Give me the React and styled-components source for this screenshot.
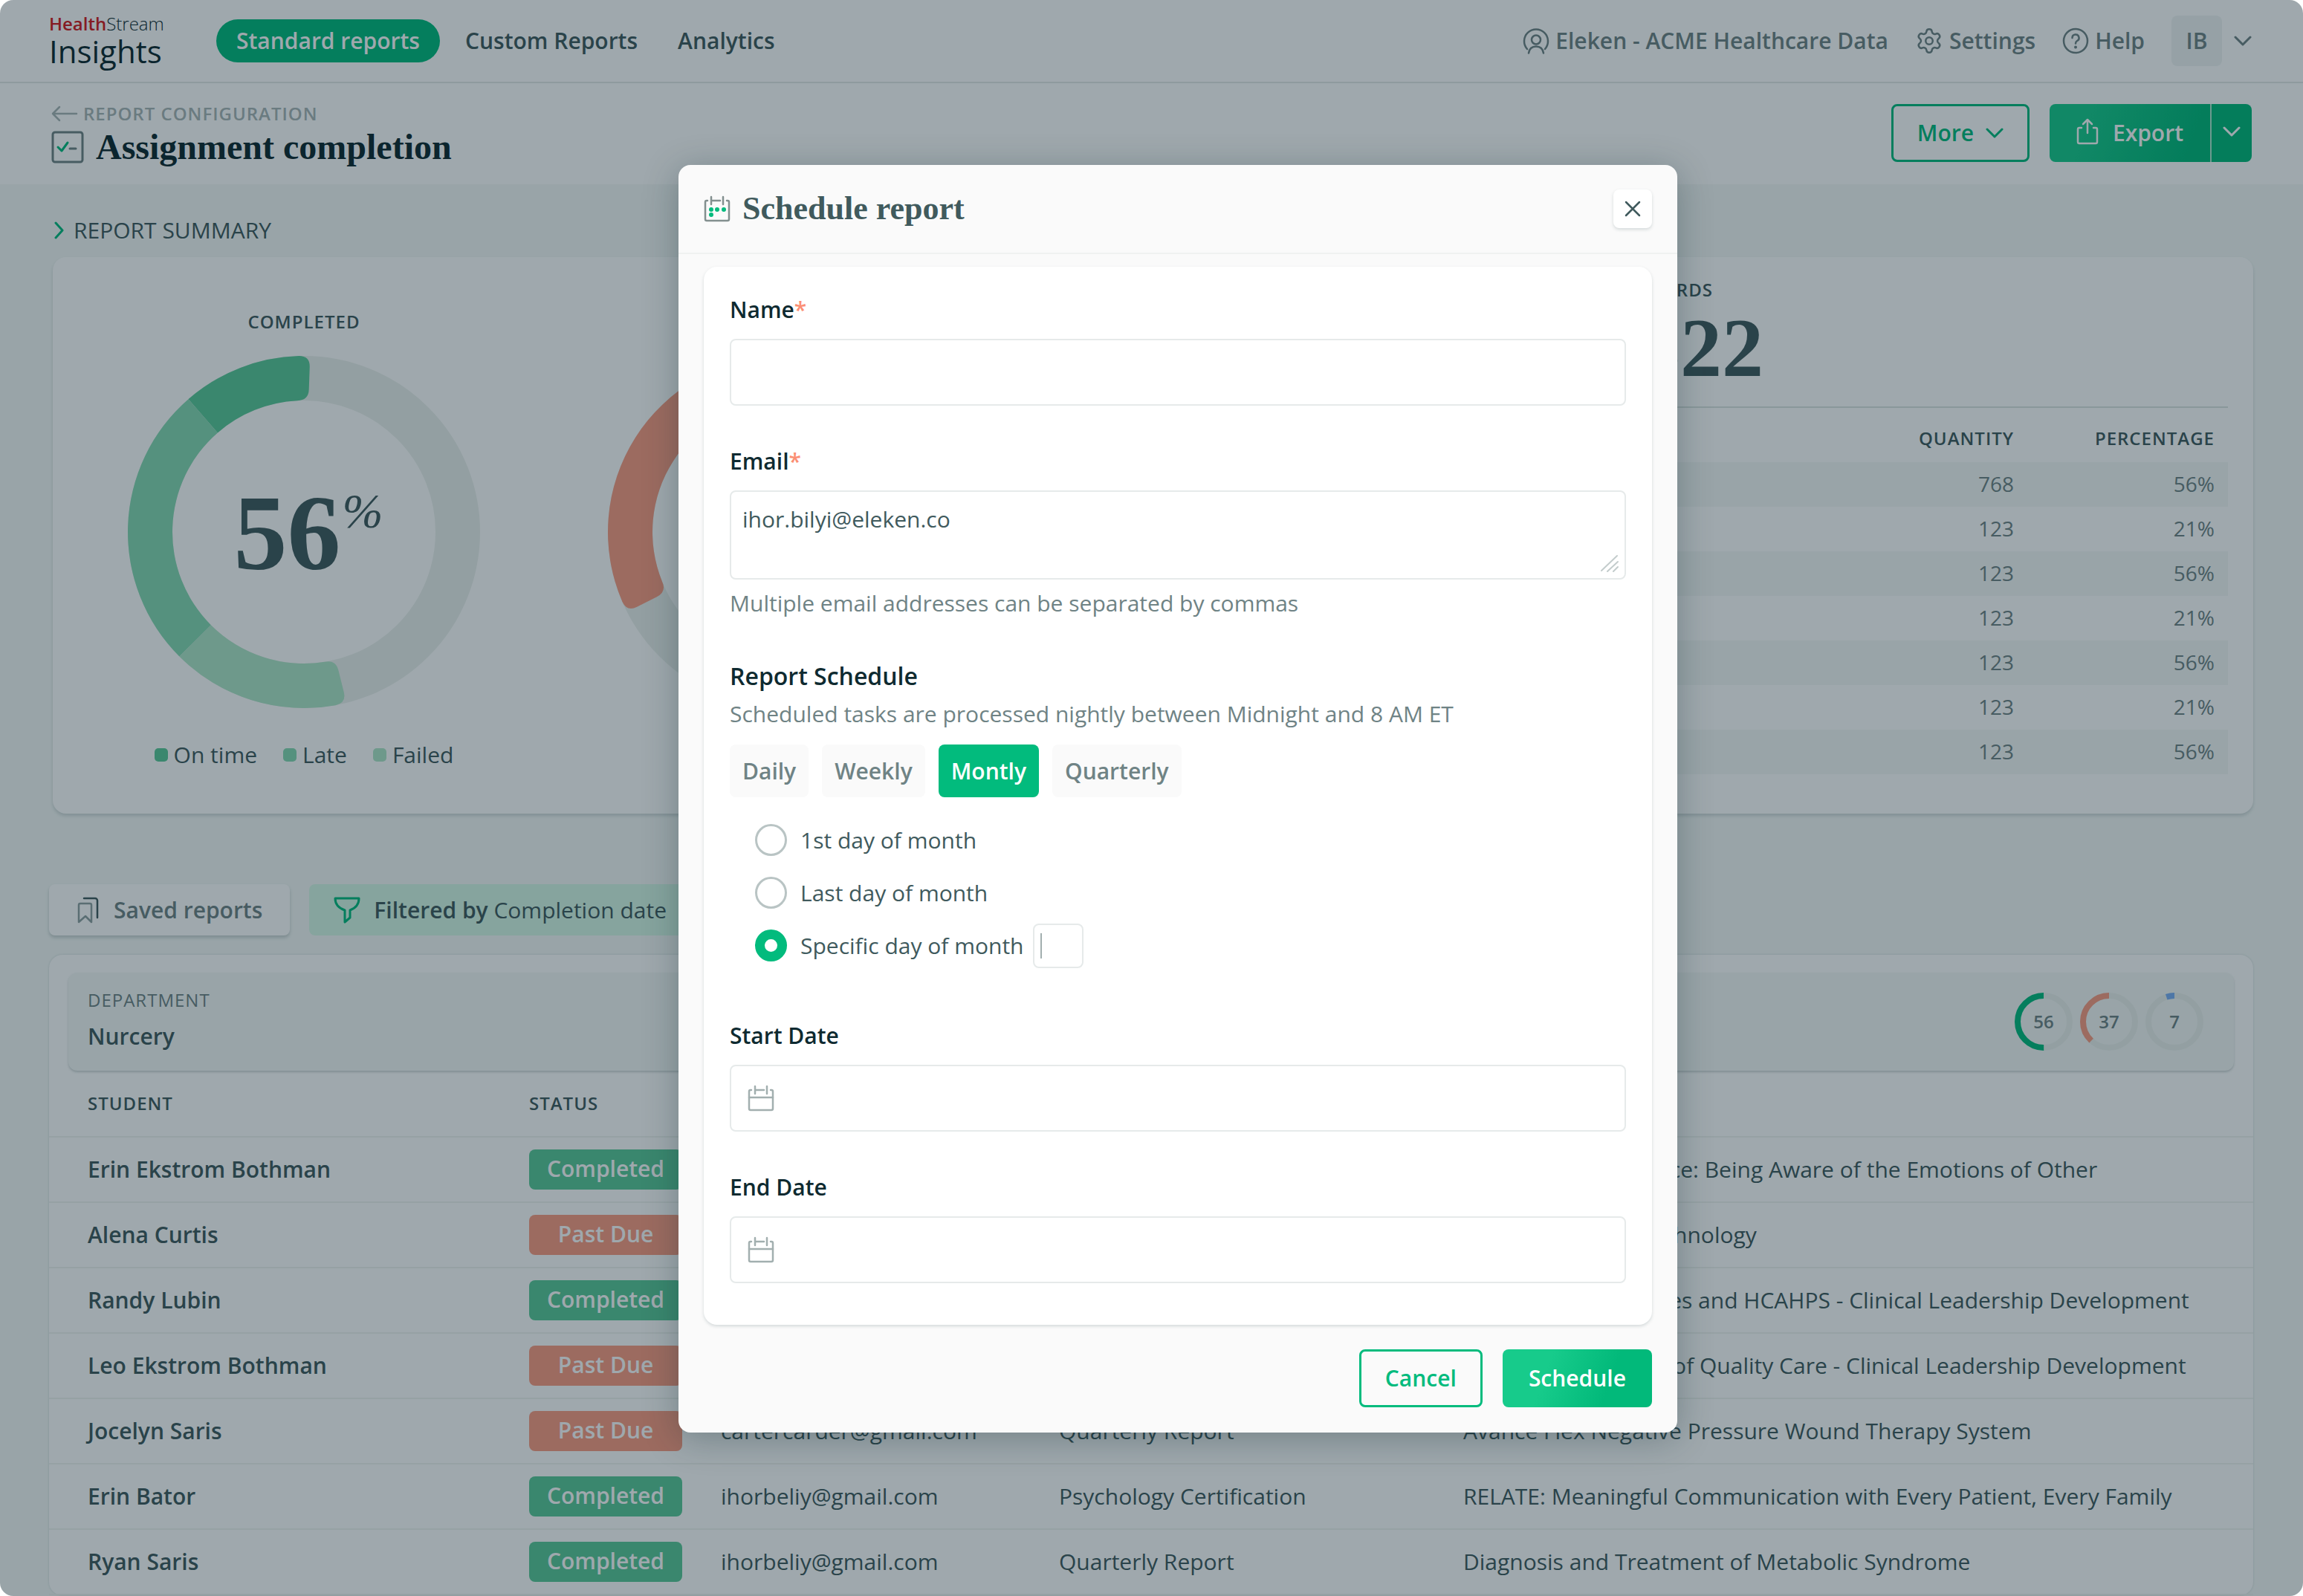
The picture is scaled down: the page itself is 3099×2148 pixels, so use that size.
import React from 'react';
import styled, { createGlobalStyle } from 'styled-components';
import { Settings } from 'lucide-react';

const GlobalStyle = createGlobalStyle`
  * {
    box-sizing: border-box;
  }
  body {
    margin: 0;
    background-color: #ffffff;
    color: #405a5d;
    font-family: "Open Sans", "Noto Sans", sans-serif;
    font-size: 30px;
    line-height: 44px;
  }
  h1, h2, h3, p, ul {
    margin: 0;
    padding: 0;
    font-weight: 400;
  }
  button, input, textarea {
    font: inherit;
    color: inherit;
  }
  button {
    cursor: pointer;
  }
  a {
    color: inherit;
    text-decoration: none;
  }
`;

const Page = styled.div`
  position: relative;
  height: 100vh;
  overflow: hidden;
  border-radius: 18px;
  background-color: #f5f9f7;
`;

/* ---------- top bar ---------- */

const TopBar = styled.header`
  display: flex;
  align-items: center;
  height: 112px;
  padding: 0 69px 0 66px;
  background-color: #ffffff;
  border-bottom: 2px solid #e3e9e6;
`;

const Logo = styled.a`
  width: 225px;
  color: #0e2a30;
`;

const LogoTop = styled.span`
  display: block;
  font-size: 24px;
  line-height: 28px;
  font-weight: 300;
  b {
    font-weight: 600;
    color: #d41920;
  }
`;

const LogoBottom = styled.span`
  display: block;
  font-size: 42px;
  line-height: 46px;
  font-weight: 500;
`;

const Nav = styled.nav`
  display: flex;
  align-items: center;
  flex: 1;
  gap: 54px;
  font-weight: 600;
`;

const NavLink = styled.a`
  ${(props) =>
    props.$active &&
    `
    display: flex;
    align-items: center;
    height: 58px;
    padding: 0 27px;
    margin-right: -20px;
    border-radius: 29px;
    background-color: #02bb7d;
    color: #ffffff;
  `}
`;

const UserNav = styled.div`
  display: flex;
  align-items: center;
  gap: 36px;
  font-weight: 600;
  color: #6f8385;
`;

const UserLink = styled.a`
  display: flex;
  align-items: center;
  gap: 8px;
`;

const Account = styled.button`
  display: flex;
  align-items: center;
  gap: 16px;
  padding: 0;
  border: 0;
  background: none;
  font-weight: 600;
`;

const Initials = styled.span`
  display: flex;
  align-items: center;
  justify-content: center;
  width: 68px;
  height: 68px;
  border-radius: 8px;
  background-color: #f0f4f3;
`;

/* ---------- title bar ---------- */

const TitleBar = styled.div`
  display: flex;
  justify-content: space-between;
  align-items: flex-start;
  height: 136px;
  padding: 28px 69px 0;
  background-color: #ffffff;
`;

const BackLink = styled.a`
  display: flex;
  align-items: center;
  gap: 7px;
  font-size: 24px;
  line-height: 26px;
  letter-spacing: 1px;
  font-weight: 600;
  color: #a9b5b5;
`;

const PageTitle = styled.h1`
  display: flex;
  align-items: center;
  gap: 16px;
  font-family: "Liberation Serif", serif;
  font-size: 48px;
  line-height: 64px;
  font-weight: 700;
  color: #0e2a30;
`;

const Actions = styled.div`
  display: flex;
  gap: 27px;
  font-weight: 600;
`;

const OutlineButton = styled.button`
  display: flex;
  align-items: center;
  gap: 16px;
  height: 78px;
  padding: 0 32px;
  border: 3px solid #02bb7d;
  border-radius: 8px;
  background: none;
  color: #02bb7d;
  font-weight: 600;
`;

const ExportGroup = styled.div`
  display: flex;
  height: 78px;
  border-radius: 8px;
  overflow: hidden;
  background: linear-gradient(110deg, #17cb8b 20%, #02b97a 70%);
  color: #ffffff;
`;

const ExportButton = styled.button`
  display: flex;
  align-items: center;
  gap: 19px;
  padding: 0 36px;
  border: 0;
  background: none;
  font-weight: 600;
  svg {
    margin-bottom: 4px;
  }
`;

const ExportToggle = styled(ExportButton)`
  padding: 0 15px;
  border-left: 2px solid #aee9cf;
`;

/* ---------- report summary ---------- */

const SummaryToggle = styled.button`
  display: flex;
  align-items: center;
  gap: 12px;
  height: 98px;
  margin-left: 73px;
  padding: 26px 0 0;
  border: 0;
  background: none;
`;

const SummaryCard = styled.section`
  display: grid;
  grid-template-columns: 474px 474px 1fr;
  gap: 172px;
  margin: 0 67px 0 71px;
  padding: 0 34px 0 101px;
  border-radius: 18px;
  background-color: #ffffff;
  box-shadow: 0 3px 4px rgba(64, 90, 93, 0.2);
`;

const Donut = styled.div`
  display: flex;
  flex-direction: column;
  align-items: center;
  padding: 71px 0 59px;
`;

const SmallCaps = styled.h3`
  min-height: 32px;
  font-size: 24px;
  line-height: 32px;
  letter-spacing: 1px;
  font-weight: 600;
`;

const DonutBox = styled.div`
  display: grid;
  place-items: center;
  margin: 30px 0 43px;
  > * {
    grid-area: 1 / 1;
  }
`;

const DonutValue = styled.div`
  display: flex;
  align-items: flex-start;
  padding: 4px 0 0 12px;
  font-family: "Liberation Serif", serif;
  font-size: 144px;
  line-height: 144px;
  font-weight: 700;
  sup {
    padding-left: 2px;
    font-size: 66px;
    line-height: 84px;
    font-weight: 400;
    font-style: italic;
  }
`;

const Legend = styled.ul`
  display: flex;
  gap: 35px;
  list-style: none;
  line-height: 40px;
`;

const LegendItem = styled.li`
  display: flex;
  align-items: center;
  gap: 8px;
  &::before {
    content: "";
    width: 18px;
    height: 18px;
    border-radius: 5px;
    background-color: ${(props) => props.$color};
  }
`;

const Records = styled.div`
  margin-left: 32px;
  padding-top: 28px;
  text-align: center;
`;

const RecordsCount = styled.p`
  padding-bottom: 17px;
  border-bottom: 2px solid #dce3e1;
  font-family: "Liberation Serif", serif;
  font-size: 112px;
  line-height: 124px;
  font-weight: 700;
`;

const RecordsTable = styled.table`
  width: 100%;
  border-collapse: collapse;
  text-align: right;
  color: #6f8385;
  font-size: 28px;
  line-height: 36px;
  th {
    width: 270px;
    height: 73px;
    padding: 8px 18px 0;
    font-size: 24px;
    letter-spacing: 1px;
    font-weight: 600;
    color: #405a5d;
  }
  th:first-child {
    width: auto;
  }
  td {
    height: 60px;
    padding: 0 18px 2px;
  }
  tbody tr:nth-child(odd) {
    background-color: #f5f9f7;
  }
`;

/* ---------- toolbar ---------- */

const Toolbar = styled.div`
  display: flex;
  gap: 26px;
  padding: 95px 66px 26px;
`;

const ToolButton = styled.button`
  display: flex;
  align-items: center;
  gap: ${(props) => (props.$filter ? 18 : 20)}px;
  height: 69px;
  padding: 0 ${(props) => (props.$filter ? 33 : 37)}px;
  border: 0;
  border-radius: 8px;
  background-color: ${(props) => (props.$filter ? '#d7f8e6' : '#ffffff')};
  box-shadow: ${(props) => (props.$filter ? 'none' : '0 3px 4px rgba(64, 90, 93, 0.25)')};
  color: ${(props) => (props.$filter ? '#405a5d' : '#6f8385')};
  font-weight: ${(props) => (props.$filter ? 400 : 600)};
  b {
    font-weight: 600;
  }
`;

/* ---------- students table ---------- */

const TableCard = styled.section`
  margin: 0 67px 0 66px;
  padding-top: 24px;
  border-radius: 18px;
  background-color: #ffffff;
  box-shadow: 0 0 3px rgba(64, 90, 93, 0.2);
`;

const Department = styled.div`
  display: flex;
  justify-content: space-between;
  align-items: center;
  height: 132px;
  margin: 0 26px;
  padding: 0 41px 0 26px;
  border-radius: 12px;
  background-color: #f5f9f7;
  box-shadow: 0 2px 3px rgba(64, 90, 93, 0.25);
`;

const DepartmentLabel = styled.p`
  font-size: 24px;
  line-height: 40px;
  letter-spacing: 1px;
  color: #6f8385;
`;

const DepartmentName = styled.p`
  line-height: 58px;
  font-weight: 600;
`;

const MiniRings = styled.div`
  display: flex;
  gap: 10px;
`;

const MiniRing = styled.div`
  display: grid;
  place-items: center;
  font-size: 24px;
  font-weight: 600;
  color: #6f8385;
  > * {
    grid-area: 1 / 1;
  }
`;

const StudentsTable = styled.table`
  width: 100%;
  table-layout: fixed;
  border-collapse: collapse;
  text-align: left;
  white-space: nowrap;
  th, td {
    height: 88px;
    padding: 0;
    border-bottom: 2px solid #f0f4f1;
  }
  th {
    height: 89px;
    font-size: 24px;
    letter-spacing: 1px;
    font-weight: 600;
  }
  th:first-child, td:first-child {
    padding-left: 52px;
    font-weight: 600;
  }
`;

const Badge = styled.span`
  display: block;
  width: 206px;
  height: 54px;
  border-radius: 8px;
  background-color: ${(props) => (props.$late ? '#fb9b82' : '#5aca98')};
  color: #ffffff;
  line-height: 52px;
  font-weight: 600;
  text-align: center;
`;

/* ---------- modal ---------- */

const Backdrop = styled.div`
  position: absolute;
  inset: 0;
  display: flex;
  justify-content: center;
  align-items: flex-start;
  padding: 222px 0 0 71px;
  background-color: rgba(7, 31, 43, 0.39);
`;

const Modal = styled.form`
  width: 1344px;
  border-radius: 16px;
  background-color: #fafafa;
  box-shadow: 0 8px 48px rgba(14, 42, 48, 0.3);
`;

const ModalHeader = styled.header`
  display: flex;
  align-items: center;
  gap: 16px;
  height: 120px;
  padding: 0 34px;
  border-bottom: 2px solid #f0f2f1;
`;

const ModalTitle = styled.h2`
  flex: 1;
  font-family: "Liberation Serif", serif;
  font-size: 44px;
  line-height: 56px;
  font-weight: 700;
`;

const CloseButton = styled.button`
  display: flex;
  align-items: center;
  justify-content: center;
  width: 52px;
  height: 52px;
  padding: 0;
  border: 0;
  border-radius: 8px;
  background-color: #ffffff;
  box-shadow: 0 2px 4px rgba(64, 90, 93, 0.2);
`;

const FormCard = styled.div`
  margin: 17px 34px 0;
  padding: 36px 35px 56px;
  border-radius: 18px;
  background-color: #ffffff;
  box-shadow: 0 2px 4px rgba(64, 90, 93, 0.2);
`;

const Field = styled.div`
  margin-bottom: ${(props) => (props.$last ? 0 : 53)}px;
`;

const Label = styled.label`
  display: block;
  margin-bottom: 17px;
  font-weight: 600;
  color: #0e2a30;
  span {
    color: #fb8f74;
  }
`;

const InputBox = styled.div`
  display: flex;
  align-items: center;
  gap: 18px;
  height: 90px;
  padding: 0 22px;
  border: 2px solid #e6eaea;
  border-radius: 8px;
`;

const Input = styled.input`
  flex: 1;
  min-width: 0;
  padding: 0;
  border: 0;
  outline: 0;
  background: none;
`;

const TextareaBox = styled.div`
  position: relative;
  height: 120px;
  border: 2px solid #e6eaea;
  border-radius: 8px;
  svg {
    position: absolute;
    right: 8px;
    bottom: 8px;
  }
`;

const Textarea = styled.textarea`
  display: block;
  width: 100%;
  height: 100%;
  padding: 15px;
  border: 0;
  outline: 0;
  resize: none;
  background: none;
`;

const Hint = styled.p`
  padding-top: ${(props) => (props.$below ? 10 : 0)}px;
  color: #6f8385;
`;

const Fieldset = styled.fieldset`
  margin: 0 0 64px;
  padding: 0;
  border: 0;
`;

const FieldsetTitle = styled.legend`
  padding: 0 0 6px;
  font-size: 32px;
  line-height: 46px;
  font-weight: 600;
  color: #0e2a30;
`;

const Tabs = styled.div`
  display: flex;
  gap: 18px;
  margin: 19px 0 22px;
`;

const Tab = styled.button`
  height: 71px;
  padding: 0 17px;
  border: 0;
  border-radius: 8px;
  background-color: ${(props) => (props.$active ? '#02bb7d' : '#fafafa')};
  color: ${(props) => (props.$active ? '#ffffff' : '#6f8385')};
  font-weight: 600;
`;

const RadioRow = styled.div`
  display: flex;
  align-items: center;
  height: 71px;
  padding-left: 34px;
  label {
    padding: 0 12px 0 18px;
  }
`;

const Radio = styled.input`
  appearance: none;
  width: 43px;
  height: 43px;
  margin: 0;
  border: 3px solid #b9c4c4;
  border-radius: 50%;
  background-color: #ffffff;
  &:checked {
    border: 13px solid #02bb7d;
  }
`;

/* the thin line is the resting caret */
const DayInput = styled.input`
  width: 68px;
  height: 60px;
  padding: 0 16px;
  border: 2px solid #e6eaea;
  border-radius: 8px;
  outline: 0;
  background: linear-gradient(#a2afaf, #a2afaf) 8px center / 2px 34px no-repeat;
`;

const ModalFooter = styled.footer`
  display: flex;
  justify-content: flex-end;
  gap: 27px;
  padding: 33px 34px 34px;
`;

const PrimaryButton = styled.button`
  height: 78px;
  padding: 0 35px;
  border: 0;
  border-radius: 8px;
  background: linear-gradient(110deg, #17cb8b 30%, #02b97a 70%);
  color: #ffffff;
  font-weight: 600;
`;

/* ---------- icons ---------- */

const Icon = ({ w = 36, h = w, color = 'currentColor', stroke = 3, children }) => (
  <svg
    width={w}
    height={h}
    viewBox={`0 0 ${w} ${h}`}
    fill="none"
    stroke={color}
    strokeWidth={stroke}
    strokeLinecap="round"
    strokeLinejoin="round"
    aria-hidden="true"
  >
    {children}
  </svg>
);

const ChevronIcon = () => (
  <Icon w={24} h={14}>
    <path d="M2 2l10 10L22 2" />
  </Icon>
);

const UserIcon = () => (
  <Icon stroke={2.5}>
    <path d="M6 29A16 16 0 1 1 30 29" />
    <circle cx="18" cy="16.500" r="6" />
    <path d="M8 34.500c1-6.500 5-9 10-9s9 2.500 10 9" />
  </Icon>
);

const HelpIcon = () => (
  <Icon stroke={2.5}>
    <circle cx="18" cy="18" r="16" />
    <path d="M13.500 14a4.500 4.500 0 1 1 6.500 4c-1.500 1-2 1.500-2 3.500" />
    <circle cx="18" cy="26.500" r="1" fill="currentColor" stroke="currentColor" strokeWidth="2" />
  </Icon>
);

const BackIcon = () => (
  <Icon w={36} h={22} stroke={2.5}>
    <path d="M34 11H2M11 2L2 11l9 9" />
  </Icon>
);

const ReportIcon = () => (
  <Icon w={44} color="#6f8385">
    <rect x="2" y="2" width="40" height="40" rx="3" />
    <path d="M9 22l5 5 8-11" stroke="#02bb7d" />
    <path d="M25 24h8" />
  </Icon>
);

const ExportIcon = () => (
  <Icon w={30} h={36} stroke={2.5}>
    <path d="M7 13H4a2 2 0 0 0-2 2v17a2 2 0 0 0 2 2h22a2 2 0 0 0 2-2V15a2 2 0 0 0-2-2h-3M15 20V2M9 8l6-6 6 6" />
  </Icon>
);

const SavedIcon = () => (
  <Icon w={30} h={36} stroke={2.5}>
    <path d="M3 11a2 2 0 0 1 2-2h13a2 2 0 0 1 2 2v23l-8-8-9 8z" stroke="#8fa0a1" />
    <path d="M10 2h15a3 3 0 0 1 3 3v23" stroke="#405a5d" />
  </Icon>
);

const FunnelIcon = () => (
  <Icon w={36} color="#02bb7d">
    <path d="M2 2h32c0 8-4 13-12 16v10l-7 6V18C6 15 2 10 2 2z" />
  </Icon>
);

const CloseIcon = () => (
  <Icon w={22} stroke={2.5}>
    <path d="M2 2l18 18M20 2L2 20" />
  </Icon>
);

const CalendarIcon = ({ dots }) => (
  <Icon w={36} color={dots ? '#83908f' : '#a2afaf'} stroke={2.5}>
    <path d="M5 7H4a2 2 0 0 0-2 2v23a2 2 0 0 0 2 2h28a2 2 0 0 0 2-2V9a2 2 0 0 0-2-2h-1" />
    <path d="M10 2v10M26 2v10M11 7h11" />
    {dots ? (
      <g fill="#02bb7d" stroke="none">
        <circle cx="10" cy="19" r="3" />
        <circle cx="18" cy="19" r="3" />
        <circle cx="27" cy="19" r="3" />
        <circle cx="10" cy="26" r="3" />
      </g>
    ) : (
      <path d="M2 17h32" />
    )}
  </Icon>
);

const GripIcon = () => (
  <Icon w={24} color="#c3cccc" stroke={2}>
    <path d="M1 22L22 2M9 23l14-13M17 23l6-6" />
  </Icon>
);

/* ---------- charts ---------- */

const OUTER = 237;
const INNER = 177;

// angles run counter-clockwise from 12 o'clock, in degrees
const polar = (radius, angle) => {
  const rad = (angle * Math.PI) / 180;
  return `${OUTER - radius * Math.sin(rad)} ${OUTER - radius * Math.cos(rad)}`;
};

const slicePath = ({ from, to, roundFrom, roundTo }) => {
  const c = 15;
  const a = (radius) => (c / radius) * (180 / Math.PI);
  const large = to - from > 180 ? 1 : 0;
  const f = roundFrom ? 1 : 0;
  const t = roundTo ? 1 : 0;
  return [
    `M${polar(OUTER, from + f * a(OUTER))}`,
    `A${OUTER} ${OUTER} 0 ${large} 0 ${polar(OUTER, to - t * a(OUTER))}`,
    `Q${polar(OUTER, to)} ${polar(OUTER - t * c, to)}`,
    `L${polar(INNER + t * c, to)}`,
    `Q${polar(INNER, to)} ${polar(INNER, to - t * a(INNER))}`,
    `A${INNER} ${INNER} 0 ${large} 1 ${polar(INNER, from + f * a(INNER))}`,
    `Q${polar(INNER, from)} ${polar(INNER + f * c, from)}`,
    `L${polar(OUTER - f * c, from)}`,
    `Q${polar(OUTER, from)} ${polar(OUTER, from + f * a(OUTER))}Z`,
  ].join(' ');
};

const DonutChart = ({ title, value, slices, legend = [] }) => (
  <Donut>
    <SmallCaps>{title}</SmallCaps>
    <DonutBox>
      <svg width={OUTER * 2} height={OUTER * 2} aria-hidden="true">
        <circle cx={OUTER} cy={OUTER} r={207} fill="none" stroke="#ecf1ed" strokeWidth="60" />
        {slices.map((slice) => (
          <path key={slice.color} d={slicePath(slice)} fill={slice.color} />
        ))}
      </svg>
      {value && (
        <DonutValue>
          {value}
          <sup>%</sup>
        </DonutValue>
      )}
    </DonutBox>
    <Legend>
      {legend.map((item) => (
        <LegendItem key={item.label} $color={item.color}>{item.label}</LegendItem>
      ))}
    </Legend>
  </Donut>
);

const SmallRing = ({ value, share, color }) => {
  const length = 2 * Math.PI * 35;
  return (
    <MiniRing>
      <svg width="78" height="78" aria-hidden="true">
        <circle cx="39" cy="39" r="35" fill="none" stroke="#ecf1ed" strokeWidth="8" />
        <circle
          cx="39"
          cy="39"
          r="35"
          fill="none"
          stroke={color}
          strokeWidth="8"
          strokeDasharray={`${length * share} ${length}`}
          transform="translate(78 0) scale(-1 1) rotate(-90 39 39)"
        />
      </svg>
      <span>{value}</span>
    </MiniRing>
  );
};

/* ---------- data ---------- */

const completedSlices = [
  { from: -2, to: 41, color: '#5aca98', roundFrom: true },
  { from: 41, to: 135, color: '#87d9b2' },
  { from: 135, to: 194, color: '#afe6c8', roundTo: true },
];

const completedLegend = [
  { label: 'On time', color: '#5aca98' },
  { label: 'Late', color: '#87d9b2' },
  { label: 'Failed', color: '#afe6c8' },
];

const pastDueSlices = [{ from: -2, to: 117, color: '#fb9b82', roundFrom: true, roundTo: true }];

const records = [
  ['768', '56%'],
  ['123', '21%'],
  ['123', '56%'],
  ['123', '21%'],
  ['123', '56%'],
  ['123', '21%'],
  ['123', '56%'],
];

const students = [
  { name: 'Erin Ekstrom Bothman', status: 'Completed', item: 'Emotional Intelligence: Being Aware of the Emotions of Other' },
  { name: 'Alena Curtis', status: 'Past Due', item: 'Medical Imaging Technology' },
  { name: 'Randy Lubin', status: 'Completed', item: 'Stroke Core Measures and HCAHPS - Clinical Leadership Development' },
  { name: 'Leo Ekstrom Bothman', status: 'Past Due', item: 'Strong Foundations of Quality Care - Clinical Leadership Development' },
  { name: 'Jocelyn Saris', status: 'Past Due', email: 'cartercarder@gmail.com', course: 'Quarterly Report', item: 'Avance Flex Negative Pressure Wound Therapy System' },
  { name: 'Erin Bator', status: 'Completed', email: 'ihorbeliy@gmail.com', course: 'Psychology Certification', item: 'RELATE: Meaningful Communication with Every Patient, Every Family' },
  { name: 'Ryan Saris', status: 'Completed', email: 'ihorbeliy@gmail.com', course: 'Quarterly Report', item: 'Diagnosis and Treatment of Metabolic Syndrome' },
];

const periods = ['Daily', 'Weekly', 'Montly', 'Quarterly'];

/* ---------- sections ---------- */

const Header = () => (
  <TopBar>
    <Logo href="#">
      <LogoTop><b>Health</b>Stream</LogoTop>
      <LogoBottom>Insights</LogoBottom>
    </Logo>
    <Nav>
      <NavLink href="#" $active>Standard reports</NavLink>
      <NavLink href="#">Custom Reports</NavLink>
      <NavLink href="#">Analytics</NavLink>
    </Nav>
    <UserNav>
      <UserLink href="#"><UserIcon />Eleken - ACME Healthcare Data</UserLink>
      <UserLink href="#"><Settings size={38} strokeWidth={2.5} absoluteStrokeWidth />Settings</UserLink>
      <UserLink href="#"><HelpIcon />Help</UserLink>
      <Account type="button">
        <Initials>IB</Initials>
        <ChevronIcon />
      </Account>
    </UserNav>
  </TopBar>
);

const Title = () => (
  <TitleBar>
    <div>
      <BackLink href="#"><BackIcon />REPORT CONFIGURATION</BackLink>
      <PageTitle><ReportIcon />Assignment completion</PageTitle>
    </div>
    <Actions>
      <OutlineButton type="button">More<ChevronIcon /></OutlineButton>
      <ExportGroup>
        <ExportButton type="button"><ExportIcon />Export</ExportButton>
        <ExportToggle type="button" aria-label="Export options"><ChevronIcon /></ExportToggle>
      </ExportGroup>
    </Actions>
  </TitleBar>
);

const Summary = () => (
  <>
    <SummaryToggle type="button">
      <Icon w={14} h={24} color="#02bb7d"><path d="M2 2l9 10-9 10" /></Icon>
      REPORT SUMMARY
    </SummaryToggle>
    <SummaryCard>
      <DonutChart title="COMPLETED" value="56" slices={completedSlices} legend={completedLegend} />
      <DonutChart slices={pastDueSlices} />
      <Records>
        <SmallCaps>RECORDS</SmallCaps>
        <RecordsCount>1,322</RecordsCount>
        <RecordsTable>
          <thead>
            <tr><th /><th>QUANTITY</th><th>PERCENTAGE</th></tr>
          </thead>
          <tbody>
            {records.map(([quantity, percentage], index) => (
              <tr key={index}><td /><td>{quantity}</td><td>{percentage}</td></tr>
            ))}
          </tbody>
        </RecordsTable>
      </Records>
    </SummaryCard>
  </>
);

const Students = () => (
  <>
    <Toolbar>
      <ToolButton type="button"><SavedIcon />Saved reports</ToolButton>
      <ToolButton type="button" $filter>
        <FunnelIcon />
        <span><b>Filtered by</b> Completion date</span>
      </ToolButton>
    </Toolbar>
    <TableCard>
      <Department>
        <div>
          <DepartmentLabel>DEPARTMENT</DepartmentLabel>
          <DepartmentName>Nurcery</DepartmentName>
        </div>
        <MiniRings>
          <SmallRing value={56} share={0.5} color="#02bb7d" />
          <SmallRing value={37} share={0.38} color="#fb9b82" />
          <SmallRing value={7} share={0.05} color="#7bb0f6" />
        </MiniRings>
      </Department>
      <StudentsTable>
        <colgroup>
          <col width="646" />
          <col width="258" />
          <col width="455" />
          <col width="544" />
          <col />
        </colgroup>
        <thead>
          <tr><th>STUDENT</th><th>STATUS</th><th /><th /><th /></tr>
        </thead>
        <tbody>
          {students.map((student) => (
            <tr key={student.name}>
              <td>{student.name}</td>
              <td><Badge $late={student.status === 'Past Due'}>{student.status}</Badge></td>
              <td>{student.email}</td>
              <td>{student.course}</td>
              <td>{student.item}</td>
            </tr>
          ))}
        </tbody>
      </StudentsTable>
    </TableCard>
  </>
);

const ScheduleModal = () => (
  <Backdrop>
    <Modal role="dialog" aria-labelledby="modal-title" onSubmit={(e) => e.preventDefault()}>
      <ModalHeader>
        <CalendarIcon dots />
        <ModalTitle id="modal-title">Schedule report</ModalTitle>
        <CloseButton type="button" aria-label="Close"><CloseIcon /></CloseButton>
      </ModalHeader>
      <FormCard>
        <Field>
          <Label htmlFor="name">Name<span>*</span></Label>
          <InputBox><Input id="name" type="text" /></InputBox>
        </Field>
        <Field>
          <Label htmlFor="email">Email<span>*</span></Label>
          <TextareaBox>
            <Textarea id="email" defaultValue="ihor.bilyi@eleken.co" />
            <GripIcon />
          </TextareaBox>
          <Hint $below>Multiple email addresses can be separated by commas</Hint>
        </Field>
        <Fieldset>
          <FieldsetTitle>Report Schedule</FieldsetTitle>
          <Hint>Scheduled tasks are processed nightly between Midnight and 8 AM ET</Hint>
          <Tabs>
            {periods.map((period) => (
              <Tab key={period} type="button" $active={period === 'Montly'}>{period}</Tab>
            ))}
          </Tabs>
          <RadioRow>
            <Radio type="radio" name="day" id="first" />
            <label htmlFor="first">1st day of month</label>
          </RadioRow>
          <RadioRow>
            <Radio type="radio" name="day" id="last" />
            <label htmlFor="last">Last day of month</label>
          </RadioRow>
          <RadioRow>
            <Radio type="radio" name="day" id="specific" defaultChecked />
            <label htmlFor="specific">Specific day of month</label>
            <DayInput type="text" aria-label="Day of month" />
          </RadioRow>
        </Fieldset>
        <Field>
          <Label htmlFor="start">Start Date</Label>
          <InputBox><CalendarIcon /><Input id="start" type="text" /></InputBox>
        </Field>
        <Field $last>
          <Label htmlFor="end">End Date</Label>
          <InputBox><CalendarIcon /><Input id="end" type="text" /></InputBox>
        </Field>
      </FormCard>
      <ModalFooter>
        <OutlineButton type="button">Cancel</OutlineButton>
        <PrimaryButton type="submit">Schedule</PrimaryButton>
      </ModalFooter>
    </Modal>
  </Backdrop>
);

const App = () => {
  return <Page>
    <GlobalStyle />
    <Header />
    <Title />
    <Summary />
    <Students />
    <ScheduleModal />
  </Page>;
};

export default App;
